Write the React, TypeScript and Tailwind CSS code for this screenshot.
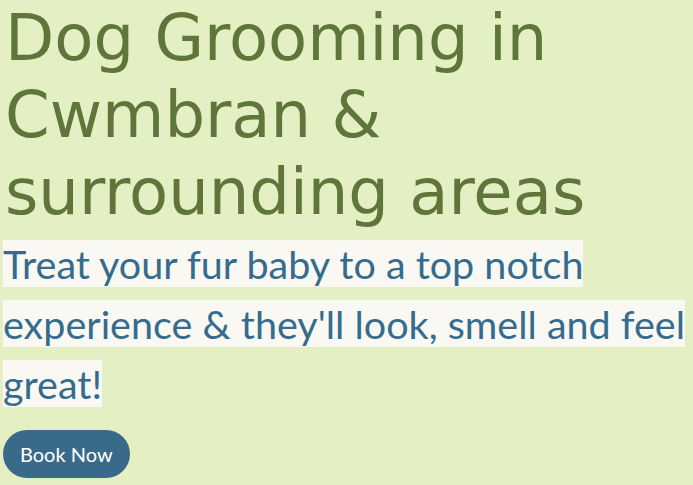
export default function App() {
    return (
        <main className="min-h-screen bg-[#e4efc4] pl-[3px]">
            <h1 className="pl-[2px] pt-[0px] font-['DejaVu_Sans',sans-serif] text-[64px] font-normal leading-[77px] text-[#5f7539]">
                Dog Grooming in Cwmbran &amp; surrounding areas
            </h1>
            <p className="mt-[3px] font-[Lato,'Liberation_Sans',sans-serif] text-[39.5px] leading-[60px] text-[#356c8e]">
                <span className="bg-[#f9f8f3] box-decoration-clone">
                    Treat your fur baby to a top notch experience &amp; they'll look, smell and feel great!
                </span>
            </p>
            <button className="mt-[16px] h-[48px] rounded-full bg-[#3a6a89] px-[17px] font-[Lato,'Liberation_Sans',sans-serif] text-[20px] text-white">
                Book Now
            </button>
        </main>
    );
}
